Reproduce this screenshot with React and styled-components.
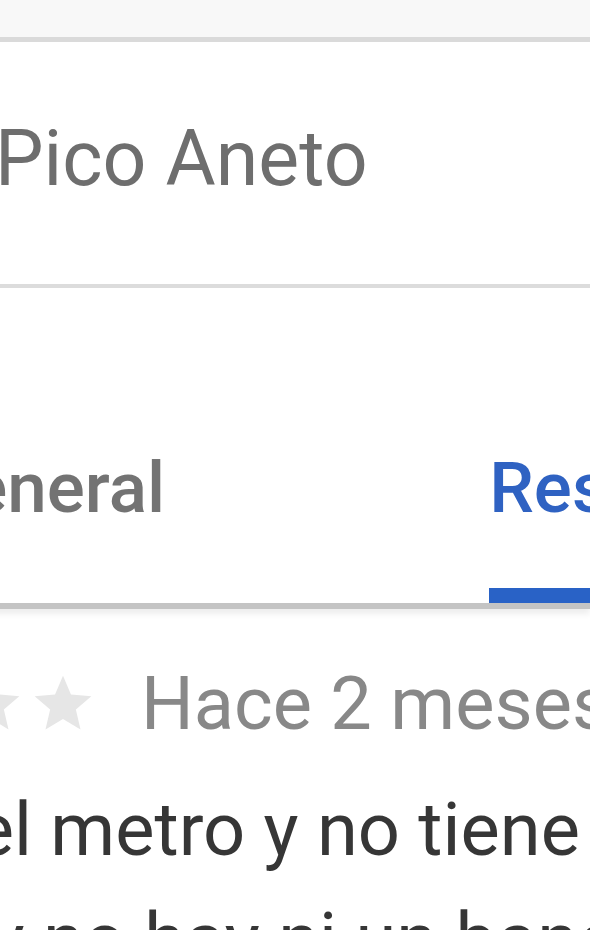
import React from 'react'
import styled, { createGlobalStyle } from 'styled-components'

const GlobalStyle = createGlobalStyle`
  html, body {
    margin: 0;
    padding: 0;
    background: #fff;
  }
  body {
    font-family: Roboto, "Noto Sans", "Liberation Sans", sans-serif;
  }
`

const Page = styled.div`
  width: 590px;
  height: 930px;
  overflow: hidden;
  background: #fff;
`

const TopBand = styled.div`
  height: 37px;
  background: #f8f8f8;
  border-bottom: 5px solid #dadada;
`

const TitleBlock = styled.div`
  box-sizing: border-box;
  height: 246px;
  padding-top: 78px;
  border-bottom: 4px solid #dcdcdc;
`

const Title = styled.h1`
  margin: 0 0 0 -5px;
  font-size: 77px;
  line-height: 79px;
  font-weight: 400;
  color: #6e6e6e;
  white-space: nowrap;
`

const TabBar = styled.div`
  display: flex;
  margin-left: -404px;
  border-bottom: 6px solid #c4c4c4;
  box-shadow: 0 5px 6px rgba(0, 0, 0, 0.07);
  position: relative;
`

const Tab = styled.div`
  flex: 0 0 686px;
  display: flex;
  justify-content: center;
  padding-top: 165px;
`

const TabLabel = styled.span`
  font-size: 71px;
  line-height: 70px;
  font-weight: 500;
  white-space: nowrap;
  color: ${p => (p.$active ? '#2f62c2' : '#737373')};
  padding-bottom: 65px;
  border-bottom: 15px solid ${p => (p.$active ? '#2962c6' : 'transparent')};
`

const Review = styled.div`
  padding-top: 58px;
`

const MetaRow = styled.div`
  display: flex;
  align-items: center;
  margin-left: -259px;
`

const Stars = styled.div`
  display: flex;
  gap: 4px;
  margin-right: 44px;
`

const StarIcon = styled.svg`
  width: 68px;
  height: 68px;
  flex: none;
  fill: ${p => (p.$on ? '#fbbc04' : '#e6e6e6')};
`

const Date = styled.span`
  font-size: 74px;
  line-height: 74px;
  color: #888;
  white-space: nowrap;
`

const Body = styled.div`
  margin: 34px 0 0 -67px;
  font-size: 74px;
  line-height: 110px;
  color: #363636;
  white-space: nowrap;
`

function Star({ on }) {
  return (
    <StarIcon $on={on} viewBox="0 0 24 24">
      <path d="M12 17.27L18.18 21l-1.64-7.03L22 9.24l-7.19-.61L12 2 9.19 8.63 2 9.24l5.46 4.73L5.82 21z" />
    </StarIcon>
  )
}

const tabs = ['Visión general', 'Reseñas', 'Información']
const rating = 3

export default function App() {
  return (
    <Page>
      <GlobalStyle />
      <TopBand />
      <TitleBlock>
        <Title>Pico Aneto</Title>
      </TitleBlock>
      <TabBar>
        {tabs.map((t, i) => (
          <Tab key={t}>
            <TabLabel $active={i === 1}>{t}</TabLabel>
          </Tab>
        ))}
      </TabBar>
      <Review>
        <MetaRow>
          <Stars>
            {[0, 1, 2, 3, 4].map(i => (
              <Star key={i} on={i < rating} />
            ))}
          </Stars>
          <Date>Hace 2 meses</Date>
        </MetaRow>
        <Body>
          del metro y no tiene
          <br />
          s y no hay ni un banco
        </Body>
      </Review>
    </Page>
  )
}
